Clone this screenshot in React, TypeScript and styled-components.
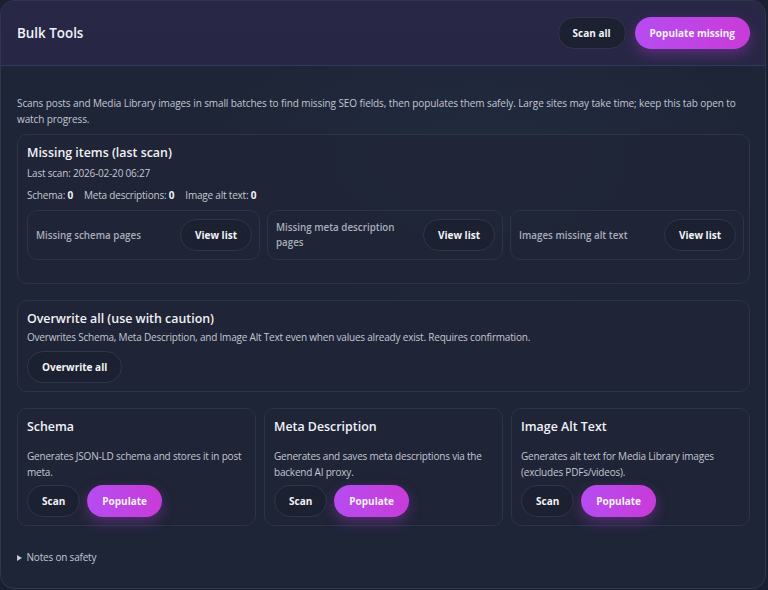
import React from "react";
import styled, { createGlobalStyle } from "styled-components";

const Global = createGlobalStyle`
  html, body { margin: 0; padding: 0; background: #1b2030; }
  body { font-family: "Open Sans", "Noto Sans", sans-serif; color: #e8eaf2; }
  * { box-sizing: border-box; }
`;

const Shell = styled.div`
  width: 766px;
  height: 589px;
  border: 1px solid #2f3650;
  border-radius: 14px;
  background: radial-gradient(ellipse 420px 220px at 480px 160px, #222a3e 0%, #1e2537 70%), #1e2537;
  overflow: hidden;
  display: flex;
  flex-direction: column;
`;

const Header = styled.header`
  height: 65px;
  flex: none;
  display: flex;
  align-items: center;
  justify-content: space-between;
  padding: 0 15px 0 16px;
  border-bottom: 1px solid #363a58;
  background: linear-gradient(180deg, #282746 0%, #272745 100%);
`;

const Title = styled.h1`
  margin: 0;
  font-size: 13.4px;
  font-weight: 600;
  color: #f1f2f8;
`;

const Actions = styled.div`
  display: flex;
  gap: 9px;
`;

const Btn = styled.button<{ $primary?: boolean }>`
  height: 32px;
  padding: 0 14px;
  border-radius: 16px;
  font-family: inherit;
  font-size: 10px;
  font-weight: 700;
  color: #f3f4f8;
  cursor: pointer;
  white-space: nowrap;
  border: 1px solid ${(p) => (p.$primary ? "transparent" : "#2f364b")};
  background: ${(p) =>
    p.$primary ? "linear-gradient(90deg, #b64cf1 0%, #c93bd8 100%)" : "#1b2130"};
  box-shadow: ${(p) => (p.$primary ? "0 5px 14px rgba(190, 60, 230, 0.35)" : "none")};
`;

const Body = styled.main`
  flex: 1;
  padding: 29px 15px 0 16px;
  display: flex;
  flex-direction: column;
`;

const Lead = styled.p`
  margin: 0 0 7px;
  font-size: 10px;
  letter-spacing: -0.1px;
  line-height: 16px;
  color: #c3c7d3;
`;

const Card = styled.section<{ $pb?: number }>`
  border: 1px solid #2d3448;
  border-radius: 10px;
  padding: 8px 8px ${(p) => p.$pb ?? 8}px 9px;
  background: rgba(31, 37, 54, 0.6);
`;

const CardTitle = styled.h2`
  margin: 0;
  font-size: 12.4px;
  line-height: 20px;
  font-weight: 600;
  color: #f1f2f8;
`;

const Meta = styled.div<{ $mt?: number }>`
  margin-top: ${(p) => p.$mt ?? 0}px;
  font-size: 10px;
  letter-spacing: -0.2px;
  line-height: 16px;
  color: #c3c7d3;
  display: flex;
  gap: 11px;
  b { color: #f1f2f8; font-weight: 700; }
`;

const SubGrid = styled.div`
  margin-top: 7px;
  display: grid;
  grid-template-columns: 233px 236px 234px;
  gap: 8px 7px;
`;

const SubCard = styled.div`
  height: 50px;
  border: 1px solid #2d3448;
  border-radius: 10px;
  display: flex;
  align-items: center;
  justify-content: space-between;
  padding: 0 7px 0 8px;
  gap: 8px;
`;

const SubLabel = styled.span`
  font-size: 9.8px;
  line-height: 15px;
  font-weight: 600;
  color: #a9aebd;
`;

const Stack = styled.div`
  display: flex;
  flex-direction: column;
  gap: 16px;
  margin-bottom: 15px;
`;

const Desc = styled.p<{ $mt?: number; $mb?: number }>`
  margin: ${(p) => p.$mt ?? 0}px 0 ${(p) => p.$mb ?? 5}px;
  font-size: 10px;
  letter-spacing: -0.2px;
  line-height: 16px;
  color: #c3c7d3;
`;

const Row = styled.div`
  display: flex;
  gap: 7px;
`;

const Triple = styled.div`
  display: grid;
  grid-template-columns: repeat(3, 1fr);
  gap: 8px;
`;

const Details = styled.details`
  margin-top: 9px;
  font-size: 10px;
  letter-spacing: -0.2px;
  color: #c3c7d3;
  summary { cursor: pointer; }
  summary::marker { font-size: 9px; }
`;

export default function App() {
  return (
    <>
      <Global />
      <Shell>
        <Header>
          <Title>Bulk Tools</Title>
          <Actions>
            <Btn>Scan all</Btn>
            <Btn $primary>Populate missing</Btn>
          </Actions>
        </Header>
        <Body>
          <Lead>
            Scans posts and Media Library images in small batches to find missing SEO fields, then
            populates them safely. Large sites may take time; keep this tab open to watch progress.
          </Lead>
          <Stack>
            <Card $pb={23}>
              <CardTitle>Missing items (last scan)</CardTitle>
              <Meta $mt={2}>Last scan: 2026-02-20 06:27</Meta>
              <Meta $mt={6}>
                <span>
                  Schema: <b>0</b>
                </span>
                <span>
                  Meta descriptions: <b>0</b>
                </span>
                <span>
                  Image alt text: <b>0</b>
                </span>
              </Meta>
              <SubGrid>
                <SubCard>
                  <SubLabel>Missing schema pages</SubLabel>
                  <Btn>View list</Btn>
                </SubCard>
                <SubCard>
                  <SubLabel>Missing meta description pages</SubLabel>
                  <Btn>View list</Btn>
                </SubCard>
                <SubCard>
                  <SubLabel>Images missing alt text</SubLabel>
                  <Btn>View list</Btn>
                </SubCard>
              </SubGrid>
            </Card>
            <Card $pb={8}>
              <CardTitle>Overwrite all (use with caution)</CardTitle>
              <Desc $mt={0} $mb={6}>
                Overwrites Schema, Meta Description, and Image Alt Text even when values already
                exist. Requires confirmation.
              </Desc>
              <Btn>Overwrite all</Btn>
            </Card>
            <Triple>
              <Card $pb={8}>
                <CardTitle>Schema</CardTitle>
                <Desc $mt={11}>Generates JSON-LD schema and stores it in post meta.</Desc>
                <Row>
                  <Btn>Scan</Btn>
                  <Btn $primary>Populate</Btn>
                </Row>
              </Card>
              <Card $pb={8}>
                <CardTitle>Meta Description</CardTitle>
                <Desc $mt={11}>Generates and saves meta descriptions via the backend AI proxy.</Desc>
                <Row>
                  <Btn>Scan</Btn>
                  <Btn $primary>Populate</Btn>
                </Row>
              </Card>
              <Card $pb={8}>
                <CardTitle>Image Alt Text</CardTitle>
                <Desc $mt={11}>Generates alt text for Media Library images (excludes PDFs/videos).</Desc>
                <Row>
                  <Btn>Scan</Btn>
                  <Btn $primary>Populate</Btn>
                </Row>
              </Card>
            </Triple>
          </Stack>
          <Details>
            <summary>Notes on safety</summary>
          </Details>
        </Body>
      </Shell>
    </>
  );
}
